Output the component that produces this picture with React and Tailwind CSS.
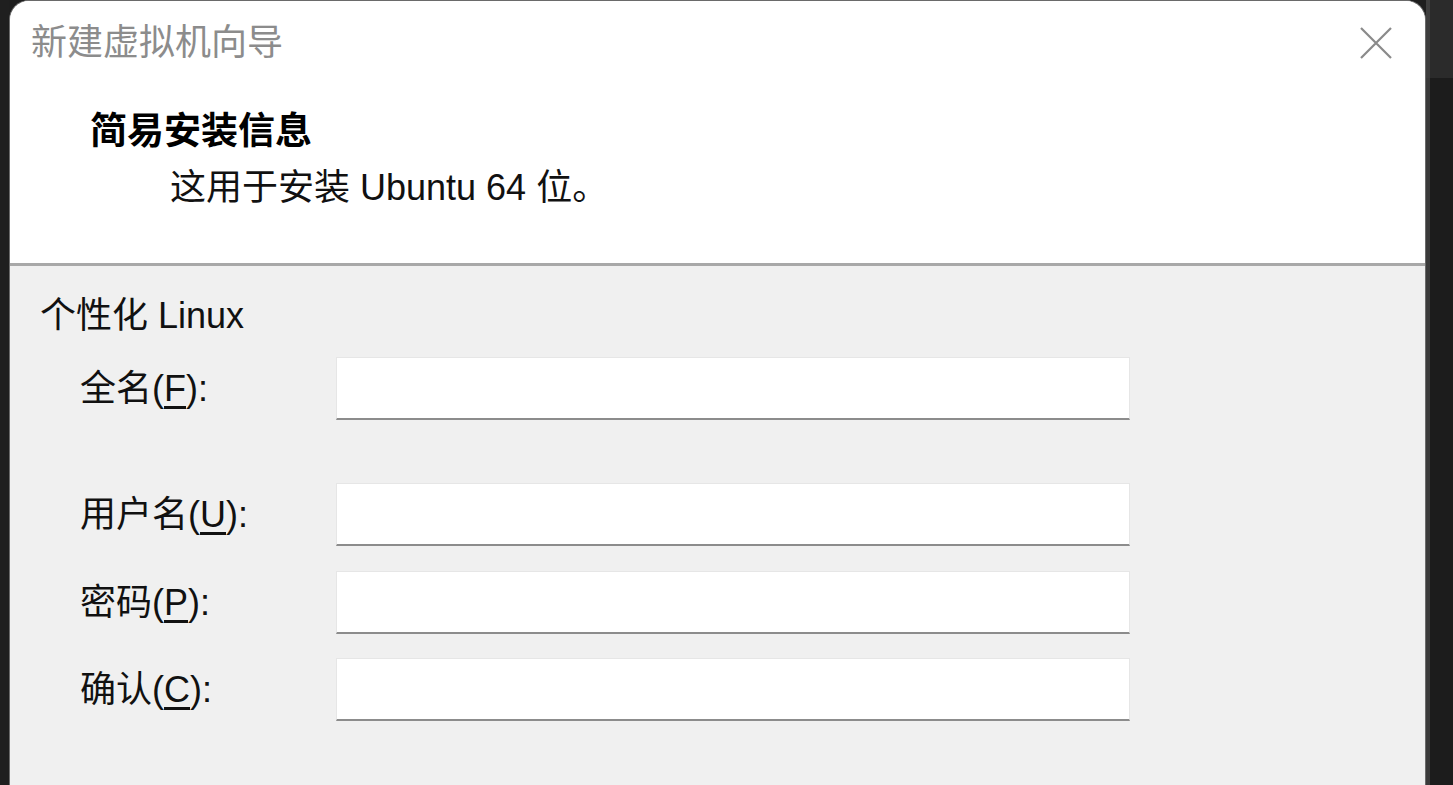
const fields = [
  { label: '全名', key: 'F', gap: 'mt-[21px]' },
  { label: '用户名', key: 'U', gap: 'mt-[63px]' },
  { label: '密码', key: 'P', gap: 'mt-[25px]' },
  { label: '确认', key: 'C', gap: 'mt-[24px]' },
]

const font = 'font-["Liberation_Sans","Noto_Sans_CJK_SC",sans-serif]'

function CloseIcon() {
  return (
    <svg width="34" height="34" viewBox="0 0 34 34" fill="none">
      <path d="M2 2 L32 32 M32 2 L2 32" stroke="#8a8a8a" strokeWidth="2.2" />
    </svg>
  )
}

export default function App() {
  return (
    <div className={`flex h-[785px] w-full overflow-hidden bg-[#1e1e1e] ${font}`}>
      <div className="w-[9px] shrink-0 bg-[#1f1f1f]" />

      <div className="flex w-[1417px] shrink-0 flex-col overflow-hidden rounded-t-[20px] border border-b-0 border-[#6a6a6a] bg-[#f0f0f0]">
        <header className="h-[265px] shrink-0 border-b-[3px] border-[#a8a8a8] bg-white">
          <div className="flex h-[84px] items-center justify-between pl-[21px] pr-[32px]">
            <span className="text-[36px] leading-none text-[#8c8c8c]">新建虚拟机向导</span>
            <CloseIcon />
          </div>
          <h1 className="mt-[25px] pl-[80px] text-[37px] font-bold leading-[44px] text-black">简易安装信息</h1>
          <p className="mt-[12px] pl-[160px] text-[36px] leading-[44px] text-[#111]">这用于安装 Ubuntu 64 位。</p>
        </header>

        <section className="pl-[30px] pt-[30px]">
          <p className="text-[36px] leading-[40px] text-[#111]">个性化 Linux</p>
          {fields.map((f) => (
            <div key={f.key} className={`flex items-center ${f.gap}`}>
              <label className="w-[296px] shrink-0 pl-[40px] text-[36px] leading-[40px] text-[#111]">
                {f.label}(<span className="underline underline-offset-[5px]">{f.key}</span>):
              </label>
              <div className="h-[63px] w-[794px] border border-b-2 border-[#e6e6e6] border-b-[#8c8c8c] bg-white" />
            </div>
          ))}
        </section>
      </div>

      <div className="flex flex-1 flex-col">
        <div className="flex h-[78px]">
          <div className="w-[4px] bg-[#3e3e3e]" />
          <div className="flex-1 bg-[#2b2b2b]" />
        </div>
        <div className="flex flex-1">
          <div className="w-[4px] bg-[#3a3a3a]" />
          <div className="flex-1 bg-[#1c1c1c]" />
        </div>
      </div>
    </div>
  )
}
